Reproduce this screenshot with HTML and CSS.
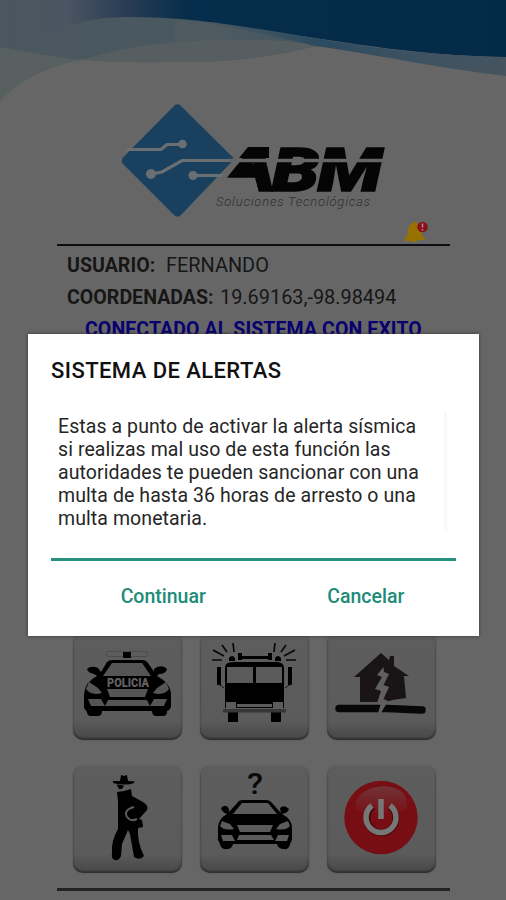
FILE: index.html
```html
<!DOCTYPE html>
<html lang="es">
<head>
<meta charset="utf-8">
<title>Sistema de alertas</title>
<link rel="stylesheet" href="styles.css">
</head>
<body>
<div class="screen">
  <svg class="waves" viewBox="0 0 506 110" width="506" height="110" aria-hidden="true">
    <defs>
      <linearGradient id="sky" x1="0" x2="1" y1="0" y2="0">
        <stop offset="0" stop-color="#4a575f"/>
        <stop offset=".13" stop-color="#4b5562"/>
        <stop offset=".24" stop-color="#2b3e55"/>
        <stop offset=".37" stop-color="#062d4b"/>
        <stop offset="1" stop-color="#032a46"/>
      </linearGradient>
      <linearGradient id="edge" x1="0" x2="1" y1="0" y2="0">
        <stop offset="0" stop-color="#4a575f"/>
        <stop offset=".4" stop-color="#4a5860"/>
        <stop offset=".62" stop-color="#2c4b60"/>
        <stop offset=".8" stop-color="#3d5261"/>
        <stop offset="1" stop-color="#45545f"/>
      </linearGradient>
    </defs>
    <path d="M0 42C35 48 60 55 82 60C45 67 22 79 0 101Z" fill="#58605f"/>
    <path d="M0 0H140L82 60Q40 55 0 47Z" fill="#4b575e"/>
    <path d="M0 0H506V57C420 56 350 43 280 33C220 23 165 17 115 18Q85 18 63 29L18 50L0 47Z" fill="url(#sky)"/>
    <path d="M18 50Q70 17 125 17C185 17 220 23 285 33C370 48 435 56 506 57V76C430 67 375 54 315 46C270 57 230 63 165 62C100 63 60 58 18 50Z" fill="url(#edge)"/>
    <path d="M175 20C215 23 255 32 305 43L315 46L270 40C235 39 205 39 175 42Z" fill="#535e62" opacity=".5"/>
    <path d="M82 60C135 42 210 38 270 40Q298 41 315 46C270 57 230 63 165 62Q120 63 82 60Z" fill="#565e61"/>
  </svg>

  <main class="content">
    <header class="brand">
      <svg class="logo" viewBox="0 0 290 125" width="290" height="125" role="img" aria-label="ABM">
        <path d="M64.500 10.500Q67.500 8 70.500 10.500L123 62.500Q124 64 122.500 66L71 120Q67.500 123.500 64 120L13 69Q10.500 66 13 62.500Z" fill="#19415f"/>
        <g fill="none" stroke="#6b6f71" stroke-width="3.200">
          <path d="M16 54.500H51L57 49.500H72"/>
          <path d="M41 79L52 77L72 65.500H124"/>
          <path d="M83 80.500H112"/>
        </g>
        <g fill="#6b6f71"><circle cx="72.500" cy="49" r="4.300"/><circle cx="41" cy="79" r="5"/><circle cx="83" cy="80.500" r="4.500"/></g>
        <text class="logo-name" x="92.500 129.500 166" y="96" transform="scale(1.25 1)">ABM</text>
        <path d="M110 82.500H145L149 98H106Z" fill="#666"/>
        <path d="M128 69H152V82.500H117ZM138 52H159V63H129Z" fill="#050505"/>
        <path d="M118 65.500H286" stroke="#666" stroke-width="3.500"/>
        <text class="logo-tag" x="106" y="110.500" textLength="154" lengthAdjust="spacing">Soluciones Tecnológicas</text>
      </svg>
      <svg class="bell" viewBox="0 0 26 24" width="26" height="24" role="img" aria-label="Notificaciones">
        <path d="M10 3Q11 0 13 2L14 3Q19 6 19 13Q19 17 22 18V20H15Q12 24 9 21H2V18Q5 16 5 11Q5 5 10 3Z" fill="#977200"/>
        <circle cx="19.500" cy="7" r="5.300" fill="#8c1018"/>
        <path d="M19.500 3.500V7.500M19.500 9V10.500" stroke="#999" stroke-width="1.500"/>
      </svg>
    </header>

    <section class="info">
      <p class="row"><b class="key key-user">USUARIO:</b><span class="val">FERNANDO</span></p>
      <p class="row"><b class="key key-coord">COORDENADAS:</b><span class="val">19.69163,-98.98494</span></p>
      <p class="status">CONECTADO AL SISTEMA CON EXITO</p>
    </section>

    <section class="tiles">
      <button class="tile" aria-label="Policía">
        <svg viewBox="0 0 109 107" width="109" height="107">
          <rect x="33" y="18.500" width="42" height="5" rx="2.500" fill="#5d5d5d" stroke="#4b4b4b"/>
          <rect x="50" y="19" width="8" height="6"/>
          <path d="M39 27H69Q73 27 75 30L82 40Q79 36 84 34Q91 32 94 36Q93 41 86 41L84 43Q97 50 98 60V74Q97 77 94 78V80Q93 83 90 83H82Q79 82 79 78H29Q29 82 26 83H18Q14 83 14 79L11 75V61Q12 49 24 43L21 41Q15 40 14 36Q18 32 25 35L28 39L34 29Q36 27 39 27Z"/>
          <path d="M39 30H69L78 43H30ZM34 56H75L72 64H37ZM13 56L16 49L25 55L29 60Q18 63 13 56ZM96 56L93 49L84 55L80 60Q91 63 96 56ZM15 66H28L32 73H18ZM94 66H81L77 73H91ZM35 67H74L77 73H32Z" fill="#555"/>
          <text class="plate" x="34" y="54" textLength="42" lengthAdjust="spacingAndGlyphs">POLICIA</text>
        </svg>
      </button>
      <button class="tile" aria-label="Bomberos">
        <svg viewBox="0 0 109 107" width="109" height="107">
          <g stroke="#080808" stroke-width="1.700"><path d="M12 27H22M13 17L24 23M22 12L27 19M33 10L34 19M96 27H86M95 17L84 23M86 12L81 19M75 10L74 19"/></g>
          <path d="M38 20H42V23H68V20H72V27H68V26H42V27H38ZM29 28V25Q32 21 35 25V28ZM75 28V25Q78 21 81 25V28ZM28 30Q30 29 35 29H78Q84 30 84 35V75H25V35Q25 31 28 30ZM17 34H21V52H17ZM88 34H92V52H88ZM28 77H38V89H28ZM71 77H81V89H71Z"/>
          <path d="M17 50L24 55M92 50L85 55" stroke="#171717"/>
          <path d="M27 34H53V50H27ZM56 34H82V50H56ZM26 69H36V75H26ZM73 69H83V75H73ZM37 71H72V74H37Z" fill="#5b5b5b"/>
          <rect x="23" y="76" width="63" height="3.500" fill="#373737"/>
        </svg>
      </button>
      <button class="tile" aria-label="Sismo">
        <svg viewBox="0 0 109 107" width="109" height="107">
          <path d="M27 44L54 20L62 27L63 23H67V33L82 43H77L79 65Q69 66 57 69H33V44Z" fill="#191516"/>
          <path d="M12 75.500H60L95 77" fill="none" stroke="#070707" stroke-width="7.500" stroke-linecap="round"/>
          <path d="M56.500 34L50 42L55 44L48 56L54 58L50 70L53.500 72L51 80H54L61 68L56.500 66L62 54L56.500 52L62 41L57 39Z" fill="#606060"/>
        </svg>
      </button>
      <button class="tile" aria-label="Sospechoso">
        <svg viewBox="0 0 109 107" width="109" height="107">
          <path d="M40 15L47 15L48 9L51 10L54 9L55 15L62 15.500Q61 18 54 18.500Q47 19 40 17ZM43.500 18.500L51 19.500L49 23H46Z"/>
          <path d="M44 26L51 25L58 23L59 30L70 36Q76 40 74 44L66 53L69 54L70 61L65 62Q64 76 71 90Q67 95 61 91L57 68L55 64L49 78L48 90Q46 95 42 94Q38 93 39 87Q38 75 45 63V35Z"/>
          <path d="M61 41Q50 44 54 51Q58 56 64 53" fill="none" stroke="#5b5b5b" stroke-width="2"/>
        </svg>
      </button>
      <button class="tile" aria-label="Auto sospechoso">
        <svg viewBox="0 0 109 107" width="109" height="107">
          <text class="question" x="47" y="28" textLength="16" lengthAdjust="spacingAndGlyphs">?</text>
          <path d="M43 34H66Q70 34 72 37L81 47L80 42Q84 38 89 43Q88 47 82 48Q92 53 92 62V74L90 78Q89 84 84 83Q78 83 77 78H33Q32 83 27 83Q21 84 20 78L18 74V62Q18 53 27 48Q22 46 21 42Q26 37 29 43V46L38 36Q39 34 43 34Z"/>
          <path d="M42 37H68L77 48H33ZM37 59H73L70 66H40ZM20 60L22 55L30 58L34 63Q24 65 20 60ZM90 60L88 55L80 58L76 63Q86 65 90 60ZM21 69H32L35 75H23ZM89 69H78L75 75H87ZM39 69H71L74 74H37Z" fill="#5b5b5b"/>
        </svg>
      </button>
      <button class="tile" aria-label="Apagar">
        <svg viewBox="0 0 109 107" width="109" height="107">
          <defs><linearGradient id="gloss" x1="0" y1="0" x2="0" y2="1"><stop offset="0" stop-color="#704044"/><stop offset="1" stop-color="#781217"/></linearGradient></defs>
          <circle cx="54" cy="51.500" r="36.700" fill="#760e13"/>
          <path d="M29 43C23 18 84 8 80 43C73 49 35 49 29 43Z" fill="url(#gloss)" opacity=".75"/>
          <path d="M46 40.500A14.500 14.500 0 1 0 63 40.500" fill="none" stroke="#420a0d" stroke-width="7"/>
          <path d="M45 39.500A15 15 0 1 0 63 39.500M54 33V53" fill="none" stroke="#777" stroke-width="5.500"/>
        </svg>
      </button>
    </section>
    <hr class="bottom-rule">
  </main>

  <div class="dialog" role="dialog" aria-label="Sistema de alertas">
    <h1 class="title">SISTEMA DE ALERTAS</h1>
    <div class="message">
      <p>Estas a punto de activar la alerta sísmica</p>
      <p>si realizas mal uso de esta función las</p>
      <p>autoridades te pueden sancionar con una</p>
      <p>multa de hasta 36 horas de arresto o una</p>
      <p>multa monetaria.</p>
    </div>
    <div class="actions">
      <button class="action">Continuar</button>
      <button class="action">Cancelar</button>
    </div>
  </div>
</div>
</body>
</html>
```

FILE: styles.css
```css
* { box-sizing: border-box; }
body { margin: 0; font-family: Roboto, "Liberation Sans", sans-serif; }
p, h1 { margin: 0; }
button { padding: 0; border: 0; background: none; font: inherit; }
svg { display: block; }

.screen { position: relative; width: 506px; height: 900px; overflow: hidden; background: #666; }
.waves { position: absolute; left: 0; top: 0; }
.content { position: relative; padding: 95px 56px 0 57px; }

.brand { height: 151px; border-bottom: 2px solid #0b0d0e; display: flex; flex-direction: column; }
.logo { margin-left: 53px; flex: none; }
.logo-name { font: italic 900 61px Roboto, sans-serif; fill: #050505; stroke: #050505; stroke-width: 1.5px; }
.logo-tag { font: italic 300 13px Roboto, sans-serif; fill: #303030; }
.bell { margin: 0 0 0 346px; flex: none; }

.info { height: 387px; padding: 3px 0 0 10px; color: #161616; }
.row { display: flex; height: 32px; white-space: nowrap; }
.key { font-weight: 700; font-size: 19.600px; line-height: 33px; }
.key-user { width: 99px; }
.key-coord { width: 153px; }
.val { font-size: 19.900px; line-height: 34px; }
.status { padding-left: 18px; line-height: 34px; font-size: 19.500px; letter-spacing: .1px; font-weight: 700; color: #08006f; text-decoration: underline; white-space: nowrap; }

.tiles { display: grid; grid-template-columns: repeat(3, 109px); gap: 26px 18px; padding-left: 16px; }
.tile { width: 109px; height: 107px; border-radius: 10px; background: linear-gradient(#5d5d5d, #5b5b5b 82%, #505050 91%, #494949); box-shadow: 0 0 2px #505050, inset 0 -2px 2px #303030; }
.plate { font: 900 12px Roboto, sans-serif; fill: #626262; }
.question { font: 500 30px Roboto, sans-serif; fill: #090909; }
.bottom-rule { height: 3px; margin: 15px 0 0; border: 0; background: #222; }

.dialog { position: absolute; left: 28px; top: 334px; width: 451px; height: 302px; padding: 22px 23px 0; background: #fff; box-shadow: 0 0 3px #333; }
.title { font-size: 22px; line-height: 29px; font-weight: 500; letter-spacing: .43px; color: #111; white-space: nowrap; }
.message { width: 396px; height: 118px; margin: 27px 0 0; padding: 3px 0 0 7px; border-right: 3px solid #f8f8f8; font-size: 19.500px; letter-spacing: .08px; line-height: 23px; color: #262626; white-space: nowrap; }
.actions { display: grid; grid-template-columns: 1fr 1fr; margin-top: 28px; padding-top: 21px; border-top: 3px solid #27917f; }
.action { padding-left: 22px; font-size: 19.500px; line-height: 29px; font-weight: 500; color: #208b79; }
```
